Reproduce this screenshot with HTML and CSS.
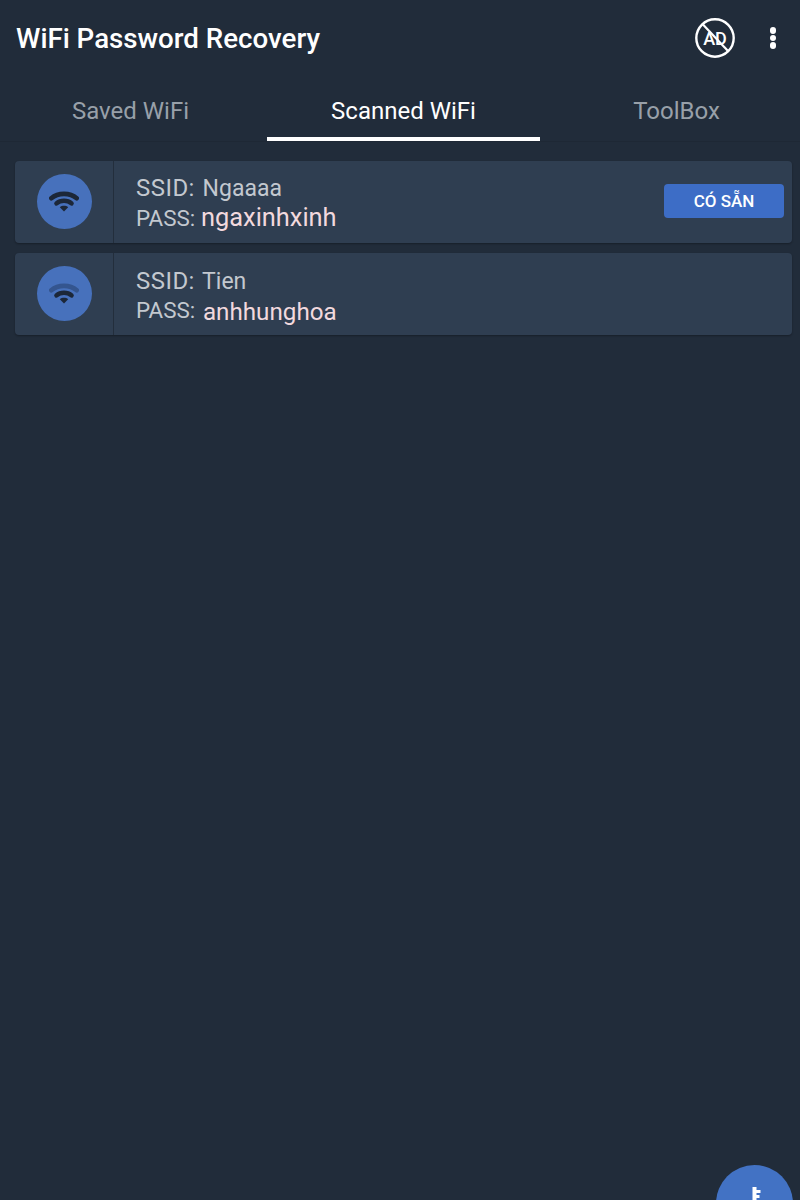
FILE: index.html
```html
<!DOCTYPE html>
<html lang="vi">
<head>
    <meta charset="UTF-8">
    <title>WiFi Password Recovery</title>
    <link rel="stylesheet" href="styles.css">
</head>
<body>
    <header class="toolbar">
        <h1 class="app-title">WiFi Password Recovery</h1>
        <svg class="ad-icon" width="40" height="40" viewBox="0 0 40 40">
            <circle cx="20" cy="20" r="18.7" fill="none" stroke="#fff" stroke-width="2.4"/>
            <text x="20" y="26.5" text-anchor="middle" class="ad-text">AD</text>
            <line x1="7" y1="5.5" x2="33" y2="33" stroke="#fff" stroke-width="2.2"/>
        </svg>
        <div class="more">
            <span class="dot"></span>
            <span class="dot"></span>
            <span class="dot"></span>
        </div>
    </header>

    <nav class="tabs">
        <div class="tab">Saved WiFi</div>
        <div class="tab active">Scanned WiFi</div>
        <div class="tab">ToolBox</div>
    </nav>

    <main class="list">
        <div class="card">
            <div class="card-icon">
                <div class="circle">
                    <svg width="30" height="21" viewBox="0 0 30 21">
                        <path d="M2.3 7.2 C9 1.4 21 1.4 27.7 7.2" class="arc"/>
                        <path d="M7.5 12.4 C11.5 8.8 18.5 8.8 22.5 12.4" class="arc"/>
                        <path d="M10.8 16.2 L15 20.5 L19.2 16.2 C17 14.4 13 14.4 10.8 16.2 Z" class="tip"/>
                    </svg>
                </div>
            </div>
            <div class="card-body">
                <div class="line"><span class="label">SSID:</span> <span class="ssid-name">Ngaaaa</span></div>
                <div class="line"><span class="label-pass">PASS:</span> <span class="pass-value large">ngaxinhxinh</span></div>
            </div>
            <button class="badge">CÓ SẴN</button>
        </div>

        <div class="card">
            <div class="card-icon">
                <div class="circle">
                    <svg width="30" height="21" viewBox="0 0 30 21">
                        <path d="M2.3 7.2 C9 1.4 21 1.4 27.7 7.2" class="arc weak"/>
                        <path d="M7.5 12.4 C11.5 8.8 18.5 8.8 22.5 12.4" class="arc"/>
                        <path d="M10.8 16.2 L15 20.5 L19.2 16.2 C17 14.4 13 14.4 10.8 16.2 Z" class="tip"/>
                    </svg>
                </div>
            </div>
            <div class="card-body second">
                <div class="line"><span class="label">SSID:</span> <span class="ssid-name">Tien</span></div>
                <div class="line"><span class="label-pass">PASS:</span> <span class="pass-value low">anhhunghoa</span></div>
            </div>
        </div>
    </main>

    <button class="fab">
        <svg width="14" height="30" viewBox="0 0 14 30">
            <path d="M4.5 0 H8.5 V3 H12.5 V6 H8.5 V8 H11.5 V11 H8.5 V30 H4.5 Z" fill="#fff"/>
        </svg>
    </button>
</body>
</html>
```

FILE: styles.css
```css
* {
    box-sizing: border-box;
}

html, body {
    height: 100%;
}

body {
    margin: 0;
    background: #212c3a;
    font-family: Roboto, "Liberation Sans", sans-serif;
    overflow: hidden;
    position: relative;
}

.toolbar {
    height: 76px;
    display: flex;
    align-items: center;
    padding: 0 16px;
}

.app-title {
    flex: 1;
    margin: 0;
    font-size: 27.7px;
    font-weight: 500;
    color: #fff;
}

.ad-icon {
    margin-right: 31px;
}

.ad-text {
    font-family: Roboto, sans-serif;
    font-size: 18px;
    font-weight: 500;
    fill: #fff;
}

.more {
    width: 14px;
    margin-right: 4px;
    display: flex;
    flex-direction: column;
    align-items: center;
    gap: 1px;
}

.dot {
    width: 6.5px;
    height: 6.5px;
    border-radius: 50%;
    background: #fff;
}

.tabs {
    height: 66px;
    display: flex;
    margin-left: -6px;
    border-bottom: 1px solid #1e2835;
}

.tab {
    width: 273px;
    flex: none;
    display: flex;
    align-items: center;
    justify-content: center;
    padding-top: 9px;
    border-bottom: 4px solid transparent;
    font-size: 24px;
    color: #98a0a9;
}

.tab.active {
    color: #fff;
    border-bottom-color: #fff;
}

.list {
    padding: 19px 8px 0 15px;
    display: flex;
    flex-direction: column;
    gap: 10px;
}

.card {
    height: 82px;
    display: flex;
    align-items: center;
    background: #2f3e51;
    border-radius: 4px;
    box-shadow: 0 1px 2px rgba(0, 0, 0, 0.3);
}

.card-icon {
    width: 99px;
    height: 100%;
    display: flex;
    align-items: center;
    justify-content: center;
    border-right: 1px solid #232e3c;
}

.circle {
    width: 55px;
    height: 55px;
    margin-bottom: 2px;
    border-radius: 50%;
    background: #4771bc;
    display: flex;
    align-items: center;
    justify-content: center;
}

.arc {
    fill: none;
    stroke: #1c2738;
    stroke-width: 4.6;
    stroke-linecap: round;
}

.arc.weak {
    stroke: #34558f;
}

.tip {
    fill: #1c2738;
}

.card-body {
    flex: 1;
    padding: 2px 0 0 22px;
}

.card-body.second {
    padding-top: 5px;
}

.line {
    font-size: 23px;
    line-height: 28px;
    color: #c3c8cf;
}

.second .line {
    line-height: 29px;
}

.label {
    font-size: 24px;
    letter-spacing: 0.45px;
    margin-right: 2px;
}

.ssid-name {
    color: #c3c8cf;
}

.label-pass {
    font-size: 22.4px;
}

.pass-value {
    font-size: 24.2px;
    margin-left: 2px;
    color: #f2d9de;
}

.pass-value.large {
    font-size: 25.4px;
    margin-left: 0;
}

.pass-value.low {
    vertical-align: -2px;
}

.badge {
    width: 120px;
    height: 34px;
    margin: 0 8px 2px 0;
    border: none;
    border-radius: 4px;
    background: #3d6dc6;
    color: #fff;
    font-family: inherit;
    font-size: 17px;
    font-weight: 500;
}

.fab {
    position: absolute;
    left: 716px;
    top: 1165px;
    width: 77px;
    height: 77px;
    border: none;
    border-radius: 50%;
    background: #4272c4;
    padding: 22px 0 0;
    display: flex;
    justify-content: center;
    align-items: flex-start;
}
```
